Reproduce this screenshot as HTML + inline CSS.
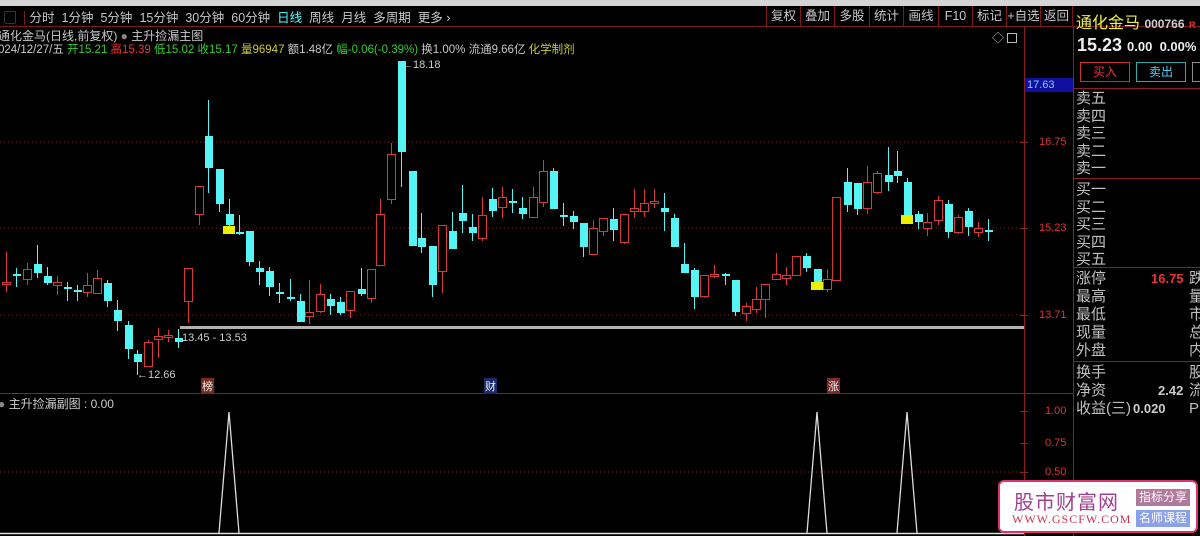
<!DOCTYPE html>
<html><head><meta charset="utf-8"><style>
*{margin:0;padding:0;box-sizing:border-box}
body{width:1200px;height:536px;background:#000;overflow:hidden;position:relative;font-family:"Liberation Sans","Noto Sans CJK SC",sans-serif;color:#c0c0c0;font-size:12px}
.a{position:absolute;white-space:nowrap}
#top{position:absolute;left:0;top:0;width:1200px;height:6px;background:#d4d4d4}
.tb span{margin-right:7px}
.rb{position:absolute;top:6px;height:20px;border-left:1px solid #7a1a1a;line-height:20px;text-align:center;color:#c8c8c8;font-size:12.5px}
.lab{color:#c0c0c0;font-size:15px;line-height:18px}
</style></head><body>
<div id="top"></div>
<div class="a" style="left:0;top:26px;width:1200px;height:1px;background:#7a1a1a"></div>
<div class="a tb" style="left:4px;top:7px;font-size:12.5px;color:#c8c8c8"><span style="color:#888">▢</span><span style="border-left:1px solid #7a1a1a;padding-left:5px">分时</span><span>1分钟</span><span>5分钟</span><span>15分钟</span><span>30分钟</span><span>60分钟</span><span style="color:#5ff">日线</span><span>周线</span><span>月线</span><span>多周期</span><span>更多 ›</span></div>
<div class="rb" style="left:766px;width:34px">复权</div>
<div class="rb" style="left:800px;width:34px">叠加</div>
<div class="rb" style="left:834px;width:35px">多股</div>
<div class="rb" style="left:869px;width:34px">统计</div>
<div class="rb" style="left:903px;width:35px">画线</div>
<div class="rb" style="left:938px;width:34px">F10</div>
<div class="rb" style="left:972px;width:34px">标记</div>
<div class="rb" style="left:1006px;width:34px">+自选</div>
<div class="rb" style="left:1040px;width:33px;border-right:1px solid #7a1a1a">返回</div>
<div class="a" style="left:-2px;top:27px;font-size:12px;color:#c8c8c8">通化金马(日线,前复权) <span style="color:#888">●</span> 主升捡漏主图</div>
<div class="a" style="left:-2px;top:41px;font-size:11.5px;color:#c8c8c8">024/12/27/五 <span style="color:#3c3">开15.21</span> <span style="color:#e33">高15.39</span> <span style="color:#3c3">低15.02</span> <span style="color:#3c3">收15.17</span> <span style="color:#cc3">量96947</span> 额1.48亿 <span style="color:#3c3">幅-0.06(-0.39%)</span> 换1.00% 流通9.66亿 <span style="color:#cc3">化学制剂</span></div>
<div class="a" style="left:992px;top:29px;color:#bbb;font-size:12px">◇ <span style="display:inline-block;width:10px;height:10px;border:1px solid #bbb;vertical-align:-1px"></span></div>
<svg class="a" style="left:0;top:0" width="1200" height="536">
<g stroke="#8a2020" stroke-dasharray="1,3" stroke-width="1">
<line x1="0" y1="142" x2="1024" y2="142"/><line x1="0" y1="228" x2="1024" y2="228"/><line x1="0" y1="315" x2="1024" y2="315"/>
<line x1="0" y1="472" x2="1024" y2="472"/></g>
<line x1="1024.5" y1="27" x2="1024.5" y2="536" stroke="#8a2020"/>
<line x1="1073.5" y1="27" x2="1073.5" y2="536" stroke="#8a2020"/>
<line x1="0" y1="393.5" x2="1073" y2="393.5" stroke="#8a2020"/>
<g stroke="#8a2020"><line x1="1020" y1="142.5" x2="1028" y2="142.5"/><line x1="1020" y1="228.5" x2="1028" y2="228.5"/><line x1="1020" y1="315.5" x2="1028" y2="315.5"/><line x1="1020" y1="411.5" x2="1028" y2="411.5"/><line x1="1020" y1="443.5" x2="1028" y2="443.5"/><line x1="1020" y1="472.5" x2="1028" y2="472.5"/></g>
<rect x="180" y="326" width="844" height="3" fill="#b0b0b0"/>
<g id="c"></g>
<rect x="223" y="226" width="12" height="8" fill="#ee0"/>
<rect x="811" y="282" width="12" height="8" fill="#ee0"/>
<rect x="901" y="215" width="12" height="9" fill="#ee0"/>
<g stroke="#ddd" fill="none" stroke-width="1.3">
<polyline points="219,533 229,412 239,533"/><polyline points="807,533 817,412 827,533"/><polyline points="897,533 907,412 917,533"/>
</g>
<line x1="0" y1="533.5" x2="1024" y2="533.5" stroke="#ddd" stroke-width="1.5"/>
<g stroke="#8a2020"><line x1="1073" y1="88.5" x2="1200" y2="88.5"/><line x1="1073" y1="178.5" x2="1200" y2="178.5"/><line x1="1073" y1="267.5" x2="1200" y2="267.5"/><line x1="1073" y1="361.5" x2="1200" y2="361.5"/></g>
</svg>
<div class="a" style="left:402px;top:59px;font-size:11px;color:#ccc">←18.18</div>
<div class="a" style="left:137px;top:369px;font-size:11px;color:#ccc">←12.66</div>
<div class="a" style="left:182px;top:332px;font-size:11px;color:#ccc">13.45 - 13.53</div>
<div class="a" style="left:201px;top:378px;font-size:11px;color:#eee;background:#7a2a1a;padding:0 1px">榜</div>
<div class="a" style="left:484px;top:378px;font-size:11px;color:#eee;background:#1a2a6a;padding:0 1px">财</div>
<div class="a" style="left:827px;top:378px;font-size:11px;color:#eee;background:#7a2a2a;padding:0 1px">涨</div>
<div class="a" style="left:-2px;top:395px;font-size:12px;color:#ccc"><span style="color:#888">●</span> 主升捡漏副图 : 0.00</div>
<div class="a" style="left:1025px;top:78px;width:48px;height:14px;background:#1010a0;color:#8cf;font-size:11px;line-height:14px;padding-left:2px">17.63</div>
<div class="a" style="left:1039px;top:136px;font-size:11px;color:#d33">16.75</div>
<div class="a" style="left:1039px;top:222px;font-size:11px;color:#d33">15.23</div>
<div class="a" style="left:1039px;top:309px;font-size:11px;color:#d33">13.71</div>
<div class="a" style="left:1045px;top:405px;font-size:11px;color:#d33">1.00</div>
<div class="a" style="left:1045px;top:437px;font-size:11px;color:#d33">0.75</div>
<div class="a" style="left:1045px;top:466px;font-size:11px;color:#d33">0.50</div>
<div class="a" style="left:1076px;top:9px;font-size:16px;color:#ee4">通化金马 <span style="font-size:12px;color:#ccc;font-weight:bold">000766</span> <span style="font-size:9px;color:#e33;font-weight:bold">R</span></div>
<div class="a" style="left:1077px;top:35px;font-size:18px;color:#eee;font-weight:bold">15.23 <span style="font-size:13px">0.00 &nbsp;0.00%</span></div>
<div class="a" style="left:1080px;top:62px;width:50px;height:20px;border:1px solid #c33;color:#e33;text-align:center;line-height:18px;font-size:12px">买入</div>
<div class="a" style="left:1136px;top:62px;width:50px;height:20px;border:1px solid #3aa;color:#5cf;text-align:center;line-height:18px;font-size:12px">卖出</div>
<div class="a" style="left:1192px;top:62px;width:20px;height:20px;border:1px solid #888"></div>
<div class="a lab" style="left:1076px;top:90px;line-height:17.5px">卖五<br>卖四<br>卖三<br>卖二<br>卖一</div>
<div class="a lab" style="left:1076px;top:181px;line-height:17.5px">买一<br>买二<br>买三<br>买四<br>买五</div>
<div class="a lab" style="left:1076px;top:270px">涨停<br>最高<br>最低<br>现量<br>外盘</div>
<div class="a lab" style="left:1076px;top:364px">换手<br>净资<br>收益(三)</div>
<div class="a" style="left:1151px;top:271px;font-size:13px;color:#e33;font-weight:bold">16.75</div>
<div class="a lab" style="left:1189px;top:270px">跌<br>量<br>市<br>总<br>内</div>
<div class="a lab" style="left:1189px;top:364px">股<br>流<br>P</div>
<div class="a" style="left:1158px;top:383px;font-size:13px;color:#ccc;font-weight:bold">2.42</div>
<div class="a" style="left:1133px;top:401px;font-size:13px;color:#ccc;font-weight:bold">0.020</div>
<div class="a" style="left:998px;top:480px;width:200px;height:53px;background:#fff;border:2px solid #e0306a;border-radius:6px">
<div class="a" style="left:14px;top:4px;font-size:20px;color:#a04090;letter-spacing:1px">股市财富网</div>
<div class="a" style="left:12px;top:30px;font-size:12px;color:#d03050;font-family:'Liberation Serif',serif;letter-spacing:1px">WWW.GSCFW.COM</div>
<div class="a" style="left:136px;top:7px;width:54px;height:17px;background:#b07a9a;color:#fff;font-size:12px;text-align:center;line-height:17px">指标分享</div>
<div class="a" style="left:136px;top:28px;width:54px;height:17px;background:#8aa0e8;color:#fff;font-size:12px;text-align:center;line-height:17px">名师课程</div>
</div>
<script>
var d=[[6,252,282,284,292,'r'],[16,268,274,276,287,'c'],[27,263,269,279,285,'r'],[37,245,264,273,278,'c'],[47,267,276,283,285,'c'],[57,276,282,285,295,'r'],[67,282,287,289,301,'c'],[77,285,290,292,301,'c'],[87,273,285,292,297,'r'],[97,270,278,293,293,'r'],[107,280,283,301,307,'c'],[117,300,310,321,331,'c'],[128,321,325,349,359,'c'],[137,350,354,362,375,'c'],[148,340,342,366,367,'r'],[158,328,336,339,358,'r'],[168,330,335,337,342,'r'],[178,329,338,342,348,'c'],[188,268,268,301,323,'r'],[199,186,186,214,225,'r'],[208,100,136,168,193,'c'],[219,169,169,204,212,'c'],[229,199,214,225,226,'c'],[239,215,232,234,235,'c'],[249,231,231,262,266,'c'],[259,261,268,272,285,'c'],[269,267,271,287,296,'c'],[279,283,292,294,303,'c'],[290,279,297,299,301,'c'],[300,294,301,322,322,'c'],[309,280,312,316,324,'r'],[320,284,294,311,313,'r'],[330,294,299,306,315,'c'],[340,297,302,313,315,'c'],[350,291,291,310,318,'r'],[361,268,289,294,296,'c'],[371,269,269,298,303,'r'],[380,199,214,265,265,'r'],[391,143,154,199,204,'r'],[401,61,61,152,187,'c'],[412,171,171,246,246,'c'],[421,213,238,247,253,'c'],[432,246,246,285,297,'c'],[442,225,225,271,293,'r'],[452,212,231,249,249,'c'],[462,185,213,221,233,'c'],[472,214,227,233,241,'c'],[482,197,215,238,241,'r'],[492,188,199,211,217,'c'],[502,187,197,207,218,'r'],[512,189,201,203,213,'c'],[522,197,208,214,219,'c'],[533,187,197,217,217,'r'],[543,160,171,202,207,'r'],[553,168,171,209,209,'c'],[563,203,215,217,226,'c'],[573,211,216,222,229,'c'],[583,223,223,247,257,'c'],[593,220,228,254,254,'r'],[603,218,218,231,236,'r'],[613,208,219,230,241,'c'],[624,214,214,242,244,'r'],[634,189,208,211,218,'r'],[644,189,203,211,217,'r'],[654,189,201,203,208,'r'],[664,193,208,212,231,'c'],[674,214,218,247,247,'c'],[684,243,264,273,273,'c'],[694,268,270,297,309,'c'],[704,275,275,296,298,'r'],[714,265,274,276,278,'r'],[725,273,274,276,285,'c'],[735,280,280,312,316,'c'],[746,303,306,313,321,'r'],[756,287,299,309,313,'r'],[765,284,284,299,318,'r'],[776,253,274,279,279,'r'],[786,267,275,278,285,'r'],[796,256,256,275,276,'r'],[806,253,256,268,272,'c'],[817,269,269,282,282,'c'],[827,269,279,289,292,'r'],[836,197,197,280,281,'r'],[847,168,182,205,212,'c'],[857,183,183,209,215,'c'],[867,166,182,208,214,'r'],[877,171,173,192,194,'r'],[888,147,175,182,191,'c'],[897,151,171,176,183,'c'],[907,178,182,215,215,'c'],[918,211,214,222,229,'c'],[927,213,222,228,236,'r'],[938,196,200,220,225,'r'],[948,200,204,232,238,'c'],[958,215,217,232,234,'r'],[968,208,211,227,236,'c'],[978,222,228,232,237,'r'],[988,219,230,232,241,'c']];
var s='';d.forEach(function(k){var x=k[0],col=k[5]=='r'?'#d83a3a':'#55f5f5';var h=Math.max(k[3]-k[2],1);
s+='<line x1="'+(x+.5)+'" y1="'+k[1]+'" x2="'+(x+.5)+'" y2="'+k[4]+'" stroke="'+col+'"/>';
if(k[5]=='r')s+='<rect x="'+(x-3.5)+'" y="'+(k[2]+.5)+'" width="8" height="'+h+'" fill="#000" stroke="'+col+'"/>';
else s+='<rect x="'+(x-3)+'" y="'+k[2]+'" width="8" height="'+h+'" fill="'+col+'"/>';});
document.getElementById('c').innerHTML=s;
</script>
</body></html>
